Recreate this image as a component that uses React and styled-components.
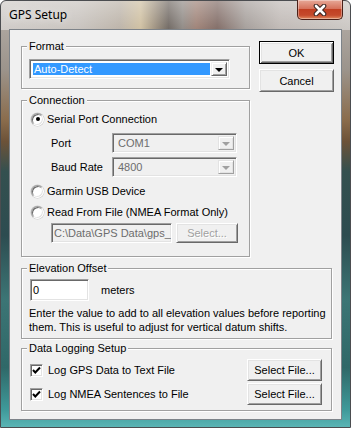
import React from 'react'
import styled, { createGlobalStyle } from 'styled-components'

const GlobalStyle = createGlobalStyle`
  html, body {
    margin: 0;
    padding: 0;
    background: #ffffff;
  }
  body {
    font-family: "Liberation Sans", Arial, sans-serif;
    font-size: 11px;
    color: #000;
  }
  * { box-sizing: border-box; }
`

const Window = styled.div`
  width: 351px;
  height: 428px;
  display: flex;
  flex-direction: column;
  padding: 0 8px 7px;
  border-radius: 6px 6px 0 0;
  border: 1px solid #4b4d50;
  background:
    linear-gradient(to bottom, rgba(255,255,255,0.35), rgba(255,255,255,0.05) 29px, rgba(255,255,255,0) 29px) ,
    linear-gradient(to right,
      #cdc9c5 0%, #c6c1bc 22%, #b9b0a5 34%, #cdbd9d 40%, #9c8f7c 44%,
      #6a625c 48%, #8b8580 52%, #9a7c70 56%, #7c6660 62%, #a19a96 70%,
      #bdb6b2 80%, #c9c5c1 100%) top / 100% 29px no-repeat,
    linear-gradient(to bottom,
      #b7b1ab 0%, #9c948c 16%, #8a6c4c 28%, #6c5238 33%, #34504f 40%,
      #2d4c50 55%, #3c7575 70%, #2f6868 86%, #3f9a9a 96%, #5ab4b4 100%);
`

const TitleBar = styled.div`
  height: 28px;
  display: flex;
  justify-content: space-between;
  align-items: flex-start;
`

const Title = styled.div`
  padding-top: 6px;
  font-family: "Noto Sans", "Open Sans", sans-serif;
  font-size: 12px;
  line-height: 16px;
  color: #000;
  text-shadow: 0 0 8px rgba(255,255,255,0.9);
`

const CloseButton = styled.div`
  width: 46px;
  height: 20px;
  margin-top: -1px;
  margin-right: -1px;
  display: flex;
  align-items: center;
  justify-content: center;
  border: 1px solid #4a2018;
  border-top: none;
  border-radius: 0 0 5px 5px;
  background: linear-gradient(to bottom, #e7a998 0%, #d6725c 45%, #c13f22 50%, #c54a2c 80%, #e08a60 100%);
  box-shadow: inset 0 0 0 1px rgba(255,255,255,0.35);
`

const Client = styled.div`
  flex: 1;
  background: #f0f0f0;
  border: 1px solid #7d8389;
  padding: 10px 9px 0 11px;
  display: flex;
  flex-direction: column;
`

const TopRow = styled.div`
  display: grid;
  grid-template-columns: 229px 75px;
  column-gap: 9px;
  align-items: start;
`

const Column = styled.div`
  display: flex;
  flex-direction: column;
  gap: ${p => p.$gap || 0}px;
  margin-top: ${p => p.$mt || 0}px;
`

const GroupBox = styled.div`
  margin-top: ${p => p.$mt}px;
  border: 1px solid #a0a0a0;
  box-shadow: inset 1px 1px 0 #fff, 1px 1px 0 #fff;
  padding: 0 ${p => p.$pr || 0}px ${p => p.$pb}px ${p => p.$pl}px;
  display: flex;
  flex-direction: column;
`

const Legend = styled.div`
  align-self: flex-start;
  margin: -7px 0 0 ${p => 5 - p.$pl}px;
  padding: 0 2px;
  background: #f0f0f0;
  line-height: 13px;
  height: 13px;
`

const Row = styled.div`
  display: flex;
  align-items: center;
  height: ${p => p.$h}px;
  margin-top: ${p => p.$mt}px;
  padding-left: ${p => p.$indent || 0}px;
  gap: ${p => p.$gap || 0}px;
`

const FieldLabel = styled.div`
  width: 61px;
  flex: none;
`

const Sunken = styled.div`
  border: 1px solid;
  border-color: #a0a0a0 #ffffff #ffffff #a0a0a0;
  box-shadow: inset 1px 1px 0 #696969, inset -1px -1px 0 #e3e3e3;
`

const Combo = styled(Sunken)`
  width: ${p => p.$w}px;
  height: 20px;
  padding: 2px;
  display: flex;
  background: ${p => (p.$disabled ? '#f0f0f0' : '#ffffff')};
  color: ${p => (p.$disabled ? '#6d6d6d' : '#000')};
`

const ComboText = styled.div`
  flex: 1;
  display: flex;
  align-items: center;
  padding: ${p => (p.$selected ? '1px' : '0 2px')};
  span {
    flex: 1;
    height: 100%;
    display: flex;
    align-items: center;
    padding-left: 1px;
    background: ${p => (p.$selected ? '#3399ff' : 'transparent')};
    color: ${p => (p.$selected ? '#fff' : 'inherit')};
  }
`

const ComboButton = styled.div`
  width: 16px;
  flex: none;
  display: flex;
  align-items: center;
  justify-content: center;
  background: #f0f0f0;
  border: 1px solid;
  border-color: ${p => (p.$disabled ? '#e3e3e3 #a0a0a0 #a0a0a0 #e3e3e3' : '#f0f0f0 #696969 #696969 #f0f0f0')};
  box-shadow: inset 1px 1px 0 #fff, inset -1px -1px 0 ${p => (p.$disabled ? '#e3e3e3' : '#a0a0a0')};
  &::after {
    content: '';
    border-left: 4px solid transparent;
    border-right: 4px solid transparent;
    border-top: 4px solid ${p => (p.$disabled ? '#a0a0a0' : '#000')};
    margin-top: 1px;
  }
`

const TextBox = styled(Sunken)`
  width: ${p => p.$w}px;
  height: ${p => p.$h}px;
  margin-left: ${p => p.$ml || 0}px;
  padding: 0 2px;
  display: flex;
  align-items: center;
  white-space: nowrap;
  overflow: hidden;
  background: ${p => (p.$disabled ? '#f0f0f0' : '#ffffff')};
  color: ${p => (p.$disabled ? '#6d6d6d' : '#000')};
  flex: none;
`

const Button = styled.div`
  width: ${p => p.$w}px;
  height: ${p => p.$h}px;
  flex: none;
  display: flex;
  align-items: center;
  justify-content: center;
  white-space: nowrap;
  background: #f0f0f0;
  border: 1px solid;
  border-color: ${p => (p.$default ? '#000' : '#fff #696969 #696969 #fff')};
  box-shadow: ${p => (p.$default
    ? 'inset 1px 1px 0 #fff, inset -1px -1px 0 #696969, inset 2px 2px 0 #e3e3e3, inset -2px -2px 0 #a0a0a0'
    : 'inset 1px 1px 0 #e3e3e3, inset -1px -1px 0 #a0a0a0')};
  color: ${p => (p.$disabled ? '#a0a0a0' : '#000')};
  text-shadow: ${p => (p.$disabled ? '1px 1px 0 #fff' : 'none')};
`

const Radio = styled.span`
  width: 13px;
  height: 13px;
  flex: none;
  border-radius: 50%;
  border: 1px solid;
  border-color: #a0a0a0 #ffffff #ffffff #a0a0a0;
  background: #fff;
  box-shadow: inset 1px 1px 0 #696969, inset -1px -1px 0 #e3e3e3, 0 0 0 0.5px #c8c8c8;
  display: flex;
  align-items: center;
  justify-content: center;
  margin-right: 3px;
  &::after {
    content: '';
    width: 4px;
    height: 4px;
    border-radius: 50%;
    background: ${p => (p.$checked ? '#000' : 'transparent')};
  }
`

const Check = styled(Sunken)`
  width: 13px;
  height: 13px;
  flex: none;
  background: #fff;
  display: flex;
  align-items: center;
  justify-content: center;
  margin-right: 5px;
`

const Note = styled.div`
  margin-top: 5px;
  line-height: 14px;
`

const Spacer = styled.div`
  flex: 1;
`

const CheckMark = () => (
  <svg width="9" height="9" viewBox="0 0 9 9">
    <path d="M1 4 L3.3 6.5 L8 1.5" fill="none" stroke="#000" strokeWidth="2" />
  </svg>
)

const CloseGlyph = () => (
  <svg width="14" height="12" viewBox="0 0 14 12">
    <path d="M3 2 L11 10 M11 2 L3 10" stroke="#3b2622" strokeWidth="4.6" strokeLinecap="round" />
    <path d="M3 2 L11 10 M11 2 L3 10" stroke="#ffffff" strokeWidth="2.6" strokeLinecap="round" />
  </svg>
)

export default function App() {
  return (
    <>
      <GlobalStyle />
      <Window>
        <TitleBar>
          <Title>GPS Setup</Title>
          <CloseButton><CloseGlyph /></CloseButton>
        </TitleBar>
        <Client>
          <TopRow>
            <Column>
              <GroupBox $mt={6} $pl={7} $pb={9}>
                <Legend $pl={7}>Format</Legend>
                <Row $h={20} $mt={6}>
                  <Combo $w={201}>
                    <ComboText $selected><span>Auto-Detect</span></ComboText>
                    <ComboButton />
                  </Combo>
                </Row>
              </GroupBox>

              <GroupBox $mt={11} $pl={9} $pb={13}>
                <Legend $pl={9}>Connection</Legend>
                <Row $h={16} $mt={4}>
                  <Radio $checked />Serial Port Connection
                </Row>
                <Row $h={20} $mt={6} $indent={20}>
                  <FieldLabel>Port</FieldLabel>
                  <Combo $w={125} $disabled>
                    <ComboText><span>COM1</span></ComboText>
                    <ComboButton $disabled />
                  </Combo>
                </Row>
                <Row $h={20} $mt={4} $indent={20}>
                  <FieldLabel>Baud Rate</FieldLabel>
                  <Combo $w={125} $disabled>
                    <ComboText><span>4800</span></ComboText>
                    <ComboButton $disabled />
                  </Combo>
                </Row>
                <Row $h={16} $mt={6}>
                  <Radio />Garmin USB Device
                </Row>
                <Row $h={16} $mt={5}>
                  <Radio />Read From File (NMEA Format Only)
                </Row>
                <Row $h={20} $mt={3} $indent={20} $gap={4}>
                  <TextBox $w={121} $h={20} $disabled>C:\Data\GPS Data\gps_</TextBox>
                  <Button $w={62} $h={20} $disabled>Select...</Button>
                </Row>
              </GroupBox>
            </Column>

            <Column $gap={5} $mt={1}>
              <Button $w={75} $h={23} $default>OK</Button>
              <Button $w={75} $h={23}>Cancel</Button>
            </Column>
          </TopRow>

          <GroupBox $mt={11} $pl={7} $pb={4}>
            <Legend $pl={7}>Elevation Offset</Legend>
            <Row $h={22} $mt={4} $gap={12}>
              <TextBox $w={59} $h={22} $ml={1}>0</TextBox>
              meters
            </Row>
            <Note>
              Enter the value to add to all elevation values before reporting<br />
              them. This is useful to adjust for vertical datum shifts.
            </Note>
          </GroupBox>

          <GroupBox $mt={9} $pl={8} $pr={9} $pb={5}>
            <Legend $pl={8}>Data Logging Setup</Legend>
            <Row $h={22} $mt={4}>
              <Check><CheckMark /></Check>
              Log GPS Data to Text File
              <Spacer />
              <Button $w={75} $h={22}>Select File...</Button>
            </Row>
            <Row $h={22} $mt={2}>
              <Check><CheckMark /></Check>
              Log NMEA Sentences to File
              <Spacer />
              <Button $w={75} $h={22}>Select File...</Button>
            </Row>
          </GroupBox>
        </Client>
      </Window>
    </>
  )
}
